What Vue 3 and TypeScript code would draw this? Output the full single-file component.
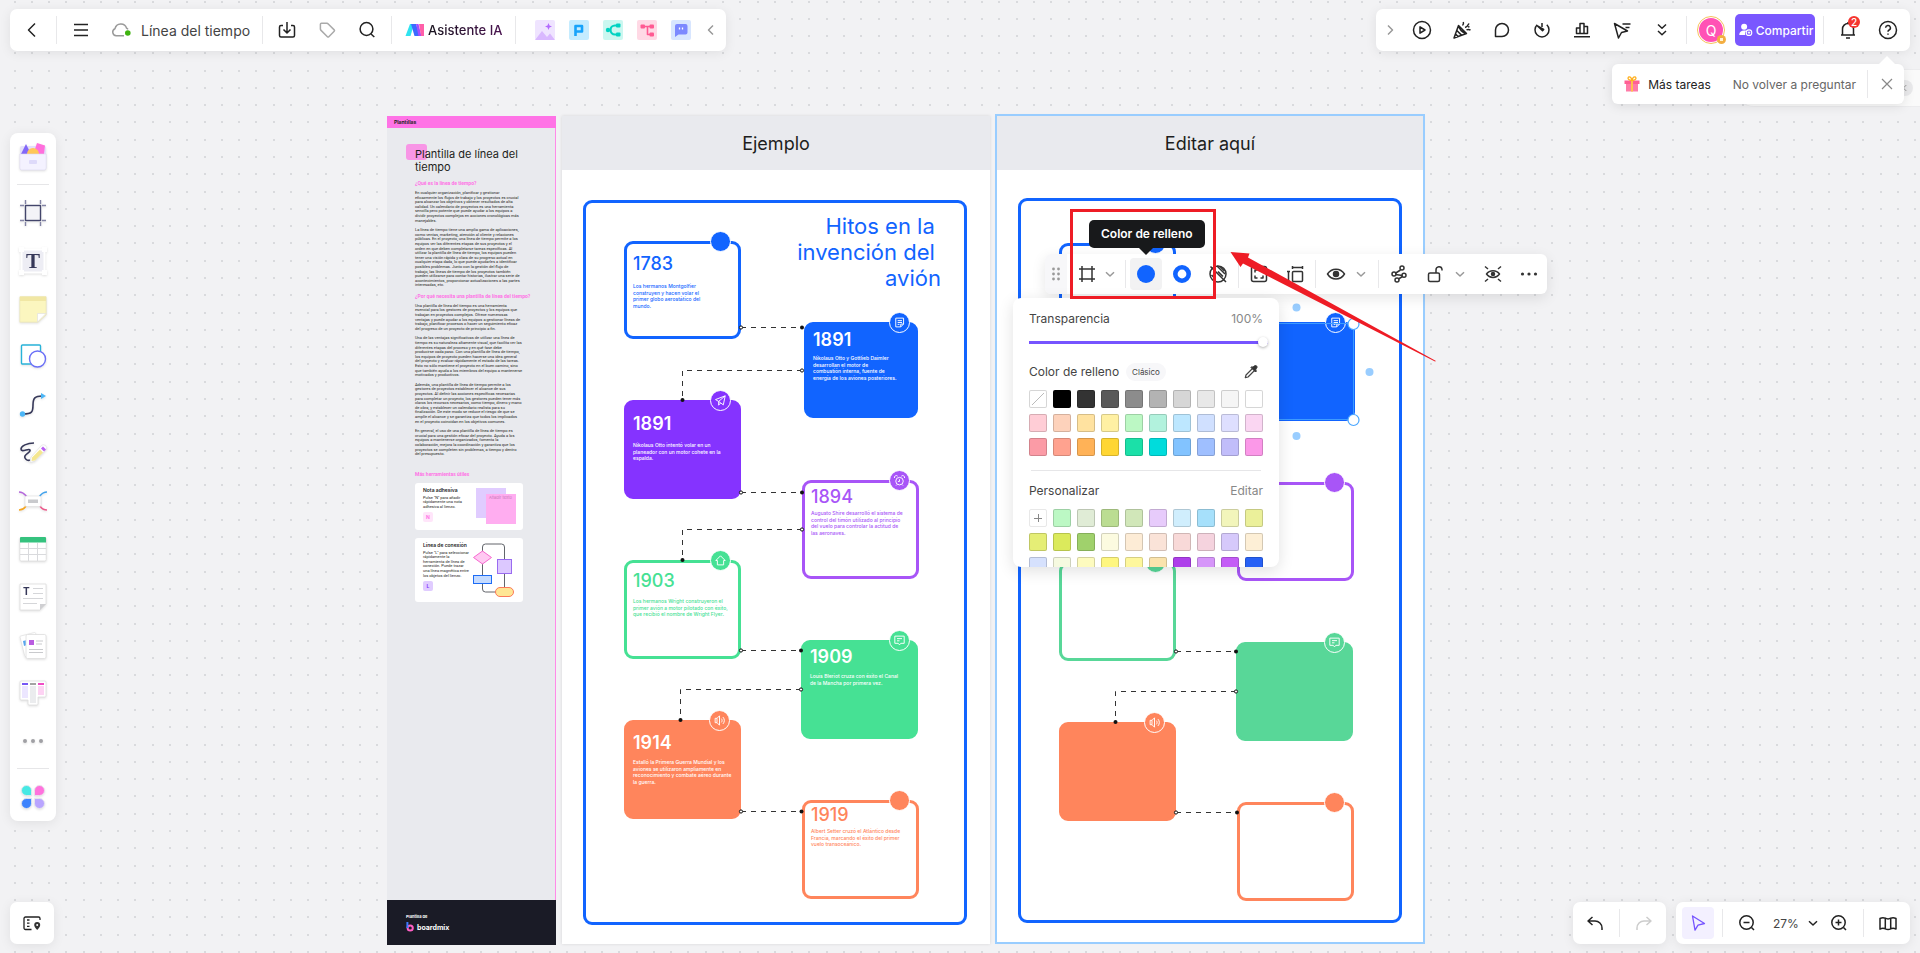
<script setup lang="ts">
import { h, ref } from 'vue'
import type { FunctionalComponent } from 'vue'

const glyphs: Record<string, string> = {
  back: '<path d="M15 5.5 8.5 12l6.500 6.500"/>',
  menu: '<path d="M5 6.500h14M5 12h14M5 17.500h14"/>',
  cloud: '<path stroke="#9a9a9a" d="M15 17.800H7.200A3.700 3.700 0 0 1 6 10.700 6 6 0 0 1 17.600 10.200c.6.3 1 .7 1.400 1.200"/><circle cx="18.800" cy="15" r="2.800" fill="#3fb30f" stroke="none"/>',
  download: '<path d="M8 7.500H6A1.500 1.500 0 0 0 4.500 9v8.500A1.500 1.500 0 0 0 6 19h12a1.500 1.500 0 0 0 1.500-1.500V9A1.500 1.500 0 0 0 18 7.500h-2M12 4v10.500M8.500 11.500l3.500 3.500 3.500-3.500"/>',
  tag: '<path stroke="#aaa" d="M5.400 6.300a1 1 0 0 1 1-1h5.600l1 .4 6.200 6.200a1 1 0 0 1 0 1.400l-5.400 5.400a1 1 0 0 1-1.400 0l-6.600-6.600-.4-1z"/>',
  search: '<circle cx="11.500" cy="11" r="6.400"/><path d="m16 16 3.300 3"/>',
  left: '<path stroke="#999" d="M14 7.500 9.500 12l4.500 4.500"/>',
  right: '<path stroke="#999" d="M10 7.500 14.500 12 10 16.500"/>',
  down: '<path d="m8 10.300 4 3.700 4-3.700"/>',
  play: '<circle cx="12" cy="12" r="8.500"/><path d="M10 8.800v6.400l5-3.200z"/>',
  party: '<path d="M8.500 7.500 4 20l12.500-4.500zM8.500 7.500c.5 3.500 4 7.500 8 8M6.800 12.500l4.700 4.600M5.500 16l2.700 2.600M12.500 7.500c1-.8 1.200-2 .8-3.500M15 9.500c1.500-.5 3-2 4-4M16.500 12c1-.7 2.500-.7 4 0M18 9l1.500-.4"/>',
  bubble: '<path d="M5.500 18.500V12a6.500 6.500 0 1 1 6.500 6.500z"/>',
  timer: '<path d="M12 5v4M7.200 6.800a7 7 0 1 0 9.600 0M7.500 8l5 4.800 1.200-1.300z"/>',
  chart: '<path d="M4 18.700h16M6.500 15.500V10H10v5.500zM10 15.500v-10h4v10zM14 15.500V8.500h3.500v7z"/>',
  pick: '<path d="M4.500 5.500 8.500 20l3-5.500 6-1.500zM12.500 6h8M15.500 9.500h4"/>',
  double: '<path d="m8 6.500 4 3.700 4-3.700M8 13l4 3.700 4-3.700"/>',
  bell: '<path d="M5 17h14M6.500 17v-6a5.500 5.500 0 0 1 11 0v6M10 20h4M12 5.500V4"/>',
  help: '<circle cx="12" cy="12" r="8.500"/><path d="M9.600 9.800a2.400 2.400 0 1 1 3.500 2.200c-.8.400-1.100.800-1.100 1.700M12 15.500v1.300"/>',
  share: '<g fill="#fff" stroke="none"><circle cx="9.500" cy="7.500" r="4"/><path d="M3 18.500c0-4 2.500-6 6.500-6 1 0 2 .1 2.800.4a5 5 0 0 0-1.300 5.600z"/></g><circle cx="16" cy="15.500" r="3.700" stroke="#fff"/><path stroke="#fff" stroke-width="1.300" d="M14.300 15.500h3.400M16 13.800v3.400"/>',
  close: '<path stroke="#888" stroke-width="1.200" d="m7 7 10 10M17 7 7 17"/>',
  gift: '<g stroke="none"><path fill="#ff7ba8" d="M6 12h12v7.500H6z"/><path fill="#ff6095" d="M4.500 8.500h15V12h-15z"/><path fill="#ffc14d" d="M11 8.500h2v11h-2z"/></g><path stroke="#ffb020" stroke-width="1.300" d="M12 8.500C9 8.500 7.500 7 8.200 5.500 9 4 11.500 5 12 8.500c.5-3.500 3-4.500 3.800-3 .7 1.500-.8 3-3.800 3z"/>',
  undo: '<path d="M9.500 6 5 10l4.500 4M5 10h7a7 7 0 0 1 7 7v2"/>',
  redo: '<path stroke="#ccc" d="m14.500 6 4.500 4-4.500 4M19 10h-7a7 7 0 0 0-7 7v2"/>',
  pointer: '<path stroke="#7654ff" stroke-width="1.300" d="m6.500 5 12 7.500-6.500 1.600-3 5z"/>',
  minus: '<circle cx="11.500" cy="11.500" r="6.700"/><path d="M8.500 11.500h6M16.500 16.500 19 19"/>',
  plus: '<circle cx="11.500" cy="11.500" r="6.700"/><path d="M8.500 11.500h6M11.500 8.500v6M16.500 16.500 19 19"/>',
  map: '<path d="M4 7.500c2-1 3.500-1 5.300-.3v10.600c-1.800-.7-3.300-.7-5.300.3zM9.300 7.200c2 1 3.500 1 5.400 0v10.600c-1.900 1-3.400 1-5.400 0M14.700 7.200c1.800-.7 3.300-.7 5.300.3v10.600c-2-1-3.500-1-5.300-.3"/>',
  minimap: '<path stroke-width="1.300" d="M11.500 18.500h-6A1.500 1.500 0 0 1 4 17V7.500A1.500 1.500 0 0 1 5.500 6h13A1.500 1.500 0 0 1 20 7.500V9M7 9h2.500M7 12.200h2.500M7 15.400h2.500"/><path fill="#333" stroke="none" d="M17.200 11a3 3 0 0 1 3 3c0 2-3 5-3 5s-3-3-3-5a3 3 0 0 1 3-3z"/><circle cx="17.200" cy="14" r="1" fill="#fff" stroke="none"/>',
  frame: '<path d="M7 4v16M17 4v16M4 7h16M4 17h16"/>',
  crossed: '<circle cx="12" cy="12" r="8"/><path d="m4.500 4.500 15.500 15.500M11 4l8 8M14 4.500l4.500 4.500M12 9.500l5 5M8.500 16l-3-3"/>',
  corners: '<rect x="4.500" y="4.500" width="15" height="15" rx="2"/><path d="M8 10.500V8h2.500M13.500 8H16v2.500M16 13.500V16h-2.500M10.500 16H8v-2.500"/>',
  size: '<rect x="9.500" y="9.500" width="10" height="10" rx="1"/><path d="M9.500 5.500h10M9.500 4v3M19.500 4v3M5.500 9.500v10M4 9.500h3M4 19.500h3"/>',
  eye: '<path d="M3.500 12c4-6.500 13-6.500 17 0-4 6.500-13 6.500-17 0z"/><circle cx="12" cy="12" r="2.500" fill="currentColor"/>',
  nodes: '<path d="M13.500 8 8 11.500M8.500 12.500l7 1M15.500 14.500 11.500 17"/><circle cx="15" cy="6" r="2"/><circle cx="7" cy="12" r="2"/><circle cx="17" cy="13.300" r="2"/><circle cx="10" cy="18" r="2"/>',
  lock: '<rect x="5.500" y="11" width="11" height="8.500" rx="1.500"/><path d="M13 11V8a3 3 0 0 1 6-.5v1"/>',
  focus: '<path d="M5.500 12c3-4.500 10-4.500 13 0-3 4.500-10 4.500-13 0zM4 4.500 7 7M20 4.500 17 7M4 19.500l3-2.500M20 19.500 17 17"/><circle cx="12" cy="12" r="1.500" fill="currentColor"/>',
  dots: '<g fill="currentColor" stroke="none"><circle cx="5.500" cy="12" r="1.600"/><circle cx="12" cy="12" r="1.600"/><circle cx="18.500" cy="12" r="1.600"/></g>',
  grip: '<g fill="#999" stroke="none"><circle cx="9.500" cy="7" r="1.400"/><circle cx="14.500" cy="7" r="1.400"/><circle cx="9.500" cy="12" r="1.400"/><circle cx="14.500" cy="12" r="1.400"/><circle cx="9.500" cy="17" r="1.400"/><circle cx="14.500" cy="17" r="1.400"/></g>',
  fill: '<circle cx="12" cy="12" r="9" fill="#1164ff" stroke="none"/>',
  ring: '<circle cx="12" cy="12" r="6.700" stroke="#1164ff" stroke-width="4.600"/>',
  dropper: '<path stroke-width="1.200" d="m13.500 8.500-6.500 6.500-.7 2.700 2.700-.7 6.500-6.500"/><path fill="#333" stroke="#333" stroke-width="1" d="m12 7.500 4.500 4.500 1-1-1-1 1-1.700c1-1 .5-2.300-.300-2.600-.8-.3-1.700 0-2.200.6l-1.200 1-.8-.8z"/>',
  photo: '<rect x="2" y="2" width="20" height="20" rx="2" fill="#efe4ff" stroke="none"/><path fill="#d9b8ff" stroke="none" d="m2 22 7-9 5 6 3-3.500 5 6.500z"/><path fill="#b36bff" stroke="none" d="m15.500 5 1 2.500 2.500 1-2.500 1-1 2.500-1-2.500-2.500-1 2.500-1z"/>',
  slides: '<rect x="2" y="2" width="20" height="20" rx="2" fill="#c5ecff" stroke="none"/><path stroke="#17a3fb" stroke-width="2.600" d="M8.500 18V8H15v5.500H9"/>',
  mind: '<rect x="2" y="2" width="20" height="20" rx="2" fill="#cbf7f0" stroke="none"/><g stroke="#00d3c2" stroke-width="2.200"><path d="M17 7.500h-3a4.500 4.500 0 0 0 0 9h3M6 12h4"/></g><g fill="#00d3c2" stroke="none"><circle cx="7" cy="12" r="2.200"/><rect x="15" y="5.500" width="4.500" height="4" rx="1"/><rect x="15" y="14.500" width="4.500" height="4" rx="1"/></g>',
  flow: '<rect x="2" y="2" width="20" height="20" rx="2" fill="#ffd9e5" stroke="none"/><path stroke="#ff5a92" stroke-width="1.600" d="M8 8.500h8M12.500 8.500v8H16"/><g fill="#ff5a92" stroke="none"><rect x="5.500" y="6.500" width="4.500" height="4" rx="1"/><rect x="14.500" y="6.500" width="4.500" height="4" rx="1"/><rect x="14.500" y="14.500" width="4.500" height="4" rx="1"/></g>',
  note: '<rect x="2" y="2" width="20" height="20" rx="2" fill="#d8e6ff" stroke="none"/><path fill="#7c89ff" stroke="none" d="M8 6h8.500a2 2 0 0 1 2 2v6.500a2 2 0 0 1-2 2H9.500L6 19V8a2 2 0 0 1 2-2z"/><path stroke="#fff" stroke-width="1.300" d="M10.500 9.500v2M13.500 9.500v2"/>',
  spark: '<g stroke="none"><path fill="#2fe3f0" d="M2.500 18 7 6h4L7.500 18z"/><path fill="#3b6bff" d="M8 6h5l4 12h-5.500z"/><path fill="#a34dff" d="m13 6 2.500 0 3 12h-3z"/><path fill="#ff5fa8" d="M16 6h5v12h-3z"/></g>',
  memo: '<path d="M6 5h12.500v9.500L14 19H6zM9 9h7M9 12h7M9 15h3M18.500 14.500H14V19"/>',
  plane: '<path d="M19.500 4.500 4 10.500l5 3 10.500-9-3 14.500-7.500-5.500v6l3-3.500"/>',
  clock: '<circle cx="12" cy="13" r="6"/><path d="M12 10v3.500H9.500M4 8a3 3 0 0 1 5-3M20 8a3 3 0 0 0-5-3M8 18.500l-1.500 1.500M16 18.500l1.500 1.500"/>',
  home: '<path d="m4.500 12 7.500-7.500 7.500 7.500H17v7H7v-7z"/>',
  comment: '<path d="M4.500 5h15v11.500H14l-2 2.500-2-2.500H4.500zM8 9h8M8 12.500h4"/>',
  sound: '<path d="M5 8.500h3l4-4v15l-4-4H5zM8 8.500v7M15 9c1.500 2 1.500 4 0 6M17.500 6.500c3 3.500 3 7.500 0 11"/>',
}

const Icon: FunctionalComponent<{ name: string }> = (props) =>
  h('svg', {
    viewBox: '0 0 24 24',
    width: 24,
    height: 24,
    fill: 'none',
    stroke: 'currentColor',
    'stroke-width': 1.5,
    'stroke-linejoin': 'round',
    'aria-hidden': 'true',
    innerHTML: glyphs[props.name],
  })
Icon.props = ['name']

const toolArt: Record<string, string> = {
  library: '<rect x="1" y="3" width="26" height="23" rx="2" fill="#e4e0fa"/><path fill="#8368f8" d="m2 11 5-10 5 10z"/><path fill="#ff6fdc" d="m15 9 3-9 8 2.500-1 8.500-6 1z"/><circle cx="14" cy="11" r="6" fill="#ffc758"/><path fill="#f4f2ff" stroke="#dcd9ee" stroke-width=".6" d="M.8 11h26.400V25a2 2 0 0 1-2 2H2.800a2 2 0 0 1-2-2z"/><rect x="10" y="17" width="8" height="4" rx="1" fill="#dedafa"/>',
  frame: '<rect x="6.500" y="6.500" width="15" height="15" fill="#f3f3f7" stroke="#43456b" stroke-width="1.400"/><path stroke="#8384a5" stroke-width="1.400" d="M6.500 1v4M21.500 1v4M6.500 23v4M21.500 23v4M1 6.500h4M23 6.500h4M1 21.500h4M23 21.500h4"/>',
  shape: '<rect x="2.500" y="2" width="19" height="19" rx="1" fill="#fff" stroke="#28b3d9" stroke-width="1.400"/><circle cx="18.500" cy="16" r="8" fill="#fff" stroke="#6a6ff7" stroke-width="1.400"/>',
  curve: '<path stroke="#363859" stroke-width="1.600" d="M4 23c9 0 10-2 10-9s2-9 9-9" fill="none"/><circle cx="3.500" cy="23" r="2.700" fill="#4cb6f7"/><path fill="#4cb6f7" d="m22 2 5 3-5 3z"/>',
  pencil: '<path fill="none" stroke="#363859" stroke-width="1.600" d="M15 4C8 4 2 7 2 10c0 4 8-1 9 1 1 3-7 4-5 8 1 2 3 3 5 2"/><path fill="#fff" stroke="#ddd" stroke-width=".6" d="m12 18 10-11a3 3 0 0 1 5 4L16 22l-5 1.500z"/><path fill="#f4e690" d="m13 18.500 8-8 3 3-8 8-3.500.5z"/><path fill="#b95ff3" d="m22 9.500 2-2 3 3-2 2z"/>',
  mind: '<path fill="none" stroke="#b467dc" stroke-width="1.500" d="M0 5c5 0 6 3 8 5"/><path fill="none" stroke="#41a2ec" stroke-width="1.500" d="M28 5c-5 0-6 3-8 5"/><path fill="none" stroke="#f5a623" stroke-width="1.500" d="M0 23c5 0 6-3 8-5"/><path fill="none" stroke="#ec5a8c" stroke-width="1.500" d="M28 23c-5 0-6-3-8-5"/><rect x="6" y="9" width="16" height="10.500" rx="1.500" fill="#fff" stroke="#ddd" stroke-width=".6"/><path fill="#c9cacd" d="M9 12.500h10v3.500H9z"/>',
  sticky: '<path fill="#fbf6bf" stroke="#e6e0b5" stroke-width=".6" d="M.8 1.800h26.400v18L19 27.200H.8z"/><path fill="#f1e7a4" d="M1 1.500h26V6H1z"/><path fill="#fff" stroke="#ddd" stroke-width=".6" d="M18.500 27v-8.500H27z"/>',
  table: '<rect x=".8" y="2.500" width="26.400" height="23.500" rx="1.500" fill="#fff" stroke="#ddd" stroke-width=".8"/><path fill="#35c27e" d="M1 3a1 1 0 0 1 1-1h24a1 1 0 0 1 1 1v4.500H1z"/><path stroke="#d9dadd" stroke-width="1" d="M1 13.500h26M1 19.500h26M9.500 8v18M18.500 8v18"/>',
  cards: '<rect x="3" y="3" width="16" height="21" rx="1" fill="#fff" stroke="#ddd" stroke-width=".6" transform="rotate(-14 11 13)"/><path fill="#56a5ee" d="m4 10 4-1v5l-3 1z"/><rect x="7" y="3.500" width="20" height="24" rx="1.500" fill="#fff" stroke="#ddd" stroke-width=".8"/><path fill="#b95ce0" d="M10 9h5v5h-5z"/><path stroke="#c9cacd" stroke-width="1" d="M17 10h7M17 13h6M10 18.500h14M10 21.500h14"/>',
  kanban: '<path fill="#fff" stroke="#ddd" stroke-width=".8" d="M2 2h24a1 1 0 0 1 1 1v14a1 1 0 0 1-1 1h-7v7a1 1 0 0 1-1 1h-8a1 1 0 0 1-1-1v-4H2a1 1 0 0 1-1-1V3a1 1 0 0 1 1-1z"/><path fill="#7657f5" d="M3 4h6v2H3z"/><path fill="#a3a3a3" d="M11 4h6v2h-6z"/><path fill="#f04cc5" d="M19 4h6v2h-6z"/><path fill="#ece6ff" d="M3 7h6v12H3z"/><path fill="#ebecee" d="M11 7h6v17h-6z"/><path fill="#fdd3f3" d="M19 7h6v9h-6z"/>',
  more: '<g fill="#a0a0a4"><circle cx="6" cy="14" r="2"/><circle cx="14" cy="14" r="2"/><circle cx="22" cy="14" r="2"/></g>',
  apps: '<g stroke="#e9e9ee" stroke-width=".8"><path fill="#46e9e4" d="M7.500 2.500a5 5 0 0 1 5 5v5h-5a5 5 0 0 1 0-10z"/><path fill="#ff72dd" d="M20.500 2.500a5 5 0 0 1 0 10h-5v-5a5 5 0 0 1 5-5z"/><path fill="#3d83fd" d="M7.500 25.500a5 5 0 0 1 0-10h5v5a5 5 0 0 1-5 5z"/><path fill="#b9a5ff" d="M20.500 25.500a5 5 0 0 1-5-5v-5h5a5 5 0 0 1 0 10z"/></g>',
}

const tools = [
  { id: 'frame', label: 'Marco' },
  { id: 'text', label: 'Texto' },
  { id: 'sticky', label: 'Nota adhesiva' },
  { id: 'shape', label: 'Forma' },
  { id: 'curve', label: 'Conexión' },
  { id: 'pencil', label: 'Lápiz' },
  { id: 'mind', label: 'Mapa mental' },
  { id: 'table', label: 'Tabla' },
  { id: 'doc', label: 'Documento' },
  { id: 'cards', label: 'Tarjetas' },
  { id: 'kanban', label: 'Kanban' },
  { id: 'more', label: 'Más' },
]

const miniApps = [
  { icon: 'photo', label: 'Imagen IA' },
  { icon: 'slides', label: 'Presentación' },
  { icon: 'mind', label: 'Mapa mental' },
  { icon: 'flow', label: 'Diagrama' },
  { icon: 'note', label: 'Chat' },
]

const meetingTools = [
  { icon: 'play', label: 'Presentar' },
  { icon: 'party', label: 'Celebrar' },
  { icon: 'bubble', label: 'Comentarios' },
  { icon: 'timer', label: 'Temporizador' },
  { icon: 'chart', label: 'Votación' },
  { icon: 'pick', label: 'Cursores' },
  { icon: 'double', label: 'Ver más' },
]

// Background grid: 64 board units at 27 % zoom, each dot snapped to whole pixels.
const step = 64 * 0.27
let gridPath = ''
for (let r = 0; r < 84; r++) {
  for (let c = 0; c < 148; c++) {
    gridPath += `M${Math.floor(14 + c * step)} ${Math.floor(1 + r * step)}h2v2h-2z`
  }
}

interface Card {
  x: number
  y: number
  w: number
  h: number
  color: string
  solid: boolean
  badge: number
  icon?: string
  year?: string
  top?: number
  gap?: number
  lines?: string[]
}

const exampleCards: Card[] = [
  { x: 62, y: 125, w: 117, h: 98, color: '#1164ff', solid: false, badge: 86, year: '1783', top: 9, gap: 8, lines: ['Los hermanos Montgolfier', 'construyen y hacen volar el', 'primer globo aerostático del', 'mundo.'] },
  { x: 242, y: 206, w: 114, h: 96, color: '#1164ff', solid: true, badge: 85, icon: 'memo', year: '1891', top: 4, gap: 4, lines: ['Nikolaus Otto y Gottlieb Daimler', 'desarrollan el motor de', 'combustión interna, fuente de', 'energía de los aviones posteriores.'] },
  { x: 62, y: 284, w: 117, h: 99, color: '#8533ff', solid: true, badge: 86, icon: 'plane', year: '1891', top: 10, gap: 7, lines: ['Nikolaus Otto intentó volar en un', 'planeador con un motor cohete en la', 'espalda.'] },
  { x: 240, y: 364, w: 117, h: 99, color: '#a855f7', solid: false, badge: 87, icon: 'clock', year: '1894', top: 3, gap: 2, lines: ['Augusto Shire desarrolló el sistema de', 'control del timón utilizado al principio', 'del vuelo para controlar la actitud de', 'las aeronaves.'] },
  { x: 62, y: 444, w: 117, h: 99, color: '#46e194', solid: false, badge: 86, icon: 'home', year: '1903', top: 7, gap: 6, lines: ['Los hermanos Wright construyeron el', 'primer avión a motor pilotado con éxito,', 'que recibió el nombre de Wright Flyer.'] },
  { x: 239, y: 524, w: 117, h: 99, color: '#46e194', solid: true, badge: 88, icon: 'comment', year: '1909', top: 3, gap: 5, lines: ['Louis Bleriot cruza con éxito el Canal', 'de la Mancha por primera vez.'] },
  { x: 62, y: 604, w: 117, h: 99, color: '#ff855c', solid: true, badge: 85, icon: 'sound', year: '1914', top: 9, gap: 5, lines: ['Estalló la Primera Guerra Mundial y los', 'aviones se utilizaron ampliamente en', 'reconocimiento y combate aéreo durante', 'la guerra.'] },
  { x: 240, y: 684, w: 117, h: 99, color: '#ff855c', solid: false, badge: 87, year: '1919', top: 1, gap: 2, lines: ['Albert Setter cruzó el Atlántico desde', 'Francia, marcando el éxito del primer', 'vuelo transoceánico.'] },
]

const editCards: Card[] = [
  { x: 62, y: 127, w: 117, h: 98, color: '#1164ff', solid: false, badge: 86 },
  { x: 242, y: 206, w: 116, h: 99, color: '#1164ff', solid: true, badge: 86, icon: 'memo' },
  { x: 62, y: 286, w: 117, h: 99, color: '#8533ff', solid: true, badge: 86, icon: 'plane' },
  { x: 240, y: 366, w: 117, h: 99, color: '#a855f7', solid: false, badge: 87 },
  { x: 62, y: 446, w: 117, h: 99, color: '#58d798', solid: false, badge: 86, icon: 'comment' },
  { x: 239, y: 526, w: 117, h: 99, color: '#58d798', solid: true, badge: 88, icon: 'comment' },
  { x: 62, y: 606, w: 117, h: 99, color: '#ff855c', solid: true, badge: 85, icon: 'sound' },
  { x: 240, y: 686, w: 117, h: 99, color: '#ff855c', solid: false, badge: 87 },
]

interface Link { d: string; from: [number, number]; to: [number, number] }
const link = (x1: number, y1: number, x2: number, y2: number): Link => ({
  d: x2 < x1 ? `M${x1} ${y1}H${x2}V${y2}` : `M${x1} ${y1}H${x2}`,
  from: [x1, y1],
  to: [x2, y2],
})
const exampleLinks = [
  link(179, 211.5, 240, 211.5),
  link(240, 254.5, 120.5, 284),
  link(179, 376.5, 240, 376.5),
  link(240, 413.5, 120.5, 444),
  link(179, 534.5, 239, 534.5),
  link(239, 573.5, 118.5, 604),
  link(179, 695.5, 239.5, 695.5),
]
const editLinks = [
  link(179, 535.5, 239, 535.5),
  link(239, 575.5, 118.5, 606),
  link(179, 696.5, 240, 696.5),
]

const boards = [
  { id: 'example', title: 'Ejemplo', cards: exampleCards, links: exampleLinks },
  { id: 'edit', title: 'Editar aquí', cards: editCards, links: editLinks },
]

const cardStyle = (c: Card) => ({
  left: `${c.x}px`,
  top: `${c.y}px`,
  width: `${c.w}px`,
  height: `${c.h}px`,
  borderColor: c.color,
  color: c.solid ? '#fff' : c.color,
  backgroundColor: c.solid ? c.color : '#fff',
  paddingTop: `${c.top ?? 0}px`,
  rowGap: `${c.gap ?? 0}px`,
})

const guide = [
  {
    title: '¿Qué es la línea de tiempo?',
    paragraphs: [
      ['En cualquier organización, planificar y gestionar', 'eficazmente los flujos de trabajo y los proyectos es crucial', 'para alcanzar los objetivos y obtener resultados de alta', 'calidad. Un calendario de proyectos es una herramienta', 'sencilla pero potente que puede ayudar a los equipos a', 'dividir proyectos complejos en acciones cronológicas más', 'manejables.'],
      ['La línea de tiempo tiene una amplia gama de aplicaciones,', 'como ventas, marketing, atención al cliente y relaciones', 'públicas. En el proyecto, una línea de tiempo permite a los', 'equipos ver las diferentes etapas de sus proyectos y el', 'orden en que deben completarse tareas específicas. Al', 'utilizar la plantilla de línea de tiempo, los equipos pueden', 'tener una visión rápida y clara de su progreso actual en', 'cualquier etapa dada, lo que puede ayudarles a identificar', 'posibles problemas. Junto con la gestión del flujo de', 'trabajo, las líneas de tiempo de los proyectos también', 'pueden utilizarse para contar historias, ilustrar una serie de', 'acontecimientos, proporcionar actualizaciones a las partes', 'interesadas, etc.'],
    ],
  },
  {
    title: '¿Por qué necesita una plantilla de línea del tiempo?',
    paragraphs: [
      ['Una plantilla de línea del tiempo es una herramienta', 'esencial para los gestores de proyectos y los equipos que', 'trabajan en proyectos complejos. Ofrece numerosas', 'ventajas y puede ayudar a los equipos a gestionar líneas de', 'trabajo, planificar procesos o hacer un seguimiento eficaz', 'del progreso de un proyecto de principio a fin.'],
      ['Una de las ventajas significativas de utilizar una línea de', 'tiempo es su naturaleza altamente visual, que facilita ver las', 'diferentes etapas del proceso y en qué fase debe', 'producirse cada paso. Con una plantilla de línea de tiempo,', 'los equipos de proyecto pueden hacerse una idea general', 'del proyecto y evaluar rápidamente el estado de las tareas.', 'Esto no sólo mantiene el proyecto en el buen camino, sino', 'que también ayuda a los miembros del equipo a mantenerse', 'motivados y productivos.'],
      ['Además, una plantilla de línea de tiempo permite a los', 'gestores de proyectos establecer el alcance de sus', 'proyectos. Al definir las acciones específicas necesarias', 'para completar un proyecto, los gestores pueden tener más', 'claros los recursos necesarios, como tiempo, dinero y mano', 'de obra, y establecer un calendario realista para su', 'finalización. De este modo se reduce el riesgo de que se', 'amplíe el alcance y se garantiza que todos los implicados', 'en el proyecto coincidan en los objetivos comunes.'],
      ['En general, el uso de una plantilla de línea de tiempo es', 'crucial para una gestión eficaz del proyecto. Ayuda a los', 'equipos a mantenerse organizados, fomenta la', 'colaboración, mejora la coordinación y garantiza que los', 'proyectos se completen sin problemas, a tiempo y dentro', 'del presupuesto.'],
    ],
  },
]

const classic = [
  'none', '#000000', '#333333', '#595959', '#8c8c8c', '#b3b3b3', '#d6d6d6', '#e8e8e8', '#f5f5f5', '#ffffff',
  '#ffcdd6', '#fdd2bb', '#ffe2a0', '#fff0a3', '#bcf8c4', '#b2f2dd', '#bde7ff', '#d0e0ff', '#dedfff', '#fad6f2',
  '#fb9ba6', '#ffa28f', '#ffb257', '#ffd633', '#1be0a8', '#00dcdc', '#82c3ff', '#9fbfff', '#c1bdfa', '#fb98e8',
]
const custom = [
  'add', '#bcf8c4', '#e0ecd6', '#bbdd92', '#d1e7b9', '#e7cbfb', '#d0eefd', '#a6e0fb', '#f2f5bb', '#ebf09a',
  '#e5ee76', '#dbea5c', '#a0d16c', '#fcfbe0', '#fdecd6', '#fae3d8', '#f8d9d8', '#f5d3de', '#d6c9fb', '#fdefd6',
  '#d6e1fd', '#f6fae0', '#fdfbbf', '#fef67f', '#fef79d', '#fae3ad', '#ae3fea', '#d696f9', '#c45cf6', '#2761f5',
]

const opacity = ref(100)
const zoom = ref('27%')
</script>

<template>
  <div class="app">
    <main class="canvas">
      <svg class="grid" aria-hidden="true"><path :d="gridPath" fill="#d9dadd" /></svg>

      <article class="guide">
        <header class="guide-tag">Plantillas</header>
        <div class="guide-body">
          <h1 class="guide-title">Plantilla de línea del<br />tiempo</h1>
          <section v-for="s in guide" :key="s.title" class="guide-section">
            <h2 class="guide-heading">{{ s.title }}</h2>
            <p v-for="(p, i) in s.paragraphs" :key="i" class="guide-text">{{ p.join('\n') }}</p>
          </section>
          <section class="guide-tools">
            <h2 class="guide-heading">Más herramientas útiles</h2>
            <div class="tip-card">
              <div class="tip-copy">
                <h3 class="tip-title">Nota adhesiva</h3>
                <p class="guide-text">{{ 'Pulse "N" para añadir\nrápidamente una nota\nadhesiva al lienzo.' }}</p>
                <kbd class="key key-pink">N</kbd>
              </div>
              <svg class="tip-art" width="46" height="39" viewBox="0 0 46 39">
                <rect x="3" y="1" width="30" height="30" fill="#e0ccff" />
                <rect x="13" y="7" width="30" height="30" fill="#ffadf0" />
                <text x="16" y="12" font-size="4" fill="#c779b8">Añadir texto</text>
              </svg>
            </div>
            <div class="tip-card tall">
              <div class="tip-copy">
                <h3 class="tip-title">Línea de conexión</h3>
                <p class="guide-text">{{ 'Pulse "L" para seleccionar\nrápidamente la\nherramienta de línea de\nconexión. Puede trazar\nuna línea magnética entre\nlos objetos del lienzo.' }}</p>
                <kbd class="key key-violet">L</kbd>
              </div>
              <svg class="tip-art" width="46" height="56" viewBox="0 1 46 56" fill="none">
                <path stroke="#62656b" stroke-width="1" d="M9.500 14V6a3 3 0 0 1 3-3h16a3 3 0 0 1 3 3v42M9.500 22v26a3 3 0 0 0 3 3h12" />
                <path fill="#ffc9f2" stroke="#f768cf" d="m9.500 10 9 6.500-9 6.500-9-6.500z" />
                <rect x="24.500" y="18.500" width="14" height="14" fill="#dcc8ff" stroke="#9a6bf0" />
                <rect x=".5" y="34.500" width="18" height="8" fill="#c5dbff" stroke="#1d6cf5" />
                <rect x="22.500" y="46.500" width="18" height="9" rx="4.500" fill="#ffe694" stroke="#fb7a5a" />
              </svg>
            </div>
          </section>
        </div>
        <footer class="guide-foot">
          <span class="foot-note">Plantilla de</span>
          <span class="brand">
            <svg width="8" height="10" viewBox="0 0 8 10" fill="none" stroke-width="2">
              <circle cx="4.200" cy="6" r="2.600" stroke="#ff5fc4" />
              <path stroke="#3d7bff" d="M1.400 0v6" />
            </svg>
            boardmix
          </span>
        </footer>
      </article>

      <article v-for="b in boards" :key="b.id" class="board" :class="b.id">
        <header class="board-title">{{ b.title }}</header>
        <div class="outline"></div>
        <p v-if="b.id === 'example'" class="headline">Hitos en la&nbsp;<br />invención del&nbsp;<br />avión</p>
        <div v-for="c in b.cards" :key="c.y" class="card" :style="cardStyle(c)">
          <strong v-if="c.year" class="year" :class="{ solid: c.solid }">{{ c.year }}</strong>
          <p v-if="c.lines" class="fact">{{ c.lines.join('\n') }}</p>
          <span class="badge" :style="{ left: `${c.badge - 3}px`, backgroundColor: c.color }">
            <Icon v-if="c.icon" :name="c.icon" class="badge-icon" />
          </span>
        </div>
        <svg class="links" aria-hidden="true">
          <g v-for="l in b.links" :key="l.d">
            <path :d="l.d" fill="none" stroke="#333" stroke-width="1" stroke-dasharray="5 5" />
            <circle :cx="l.from[0]" :cy="l.from[1]" r="1.600" fill="#fff" stroke="#111" />
            <circle :cx="l.to[0]" :cy="l.to[1]" r="2" fill="#111" />
          </g>
        </svg>
      </article>

      <svg class="selection" width="150" height="150" viewBox="0 0 150 150" aria-hidden="true">
        <rect x=".5" y="20.500" width="124" height="96" fill="none" stroke="#3d9bff" />
        <g fill="#99cdff"><circle cx="67.500" cy="4.500" r="4" /><circle cx="140.500" cy="69" r="4" /><circle cx="67.500" cy="133" r="4" /></g>
        <g fill="#fff" stroke="#4aa6ff" stroke-width="1.200"><circle cx="124.500" cy="21" r="5.500" /><circle cx="124.500" cy="117" r="5.500" /></g>
      </svg>

      <div class="floatbar" role="toolbar" aria-label="Formato">
        <button class="grip" aria-label="Mover"><Icon name="grip" /></button>
        <button class="fbtn" aria-label="Marco"><Icon name="frame" /></button>
        <button class="more slim" aria-label="Opciones de marco"><Icon name="down" class="more-icon" /></button>
        <i class="sep"></i>
        <button class="fbtn active" aria-label="Relleno"><Icon name="fill" /></button>
        <button class="fbtn" aria-label="Borde"><Icon name="ring" /></button>
        <button class="fbtn" aria-label="Sin trazo"><Icon name="crossed" /></button>
        <i class="sep"></i>
        <button class="fbtn" aria-label="Ajustar"><Icon name="corners" /></button>
        <button class="fbtn" aria-label="Tamaño"><Icon name="size" /></button>
        <i class="sep"></i>
        <button class="fbtn" aria-label="Ver"><Icon name="eye" /></button>
        <button class="more" aria-label="Opciones de vista"><Icon name="down" class="more-icon" /></button>
        <i class="sep"></i>
        <button class="fbtn" aria-label="Conectar"><Icon name="nodes" /></button>
        <button class="fbtn" aria-label="Bloquear"><Icon name="lock" /></button>
        <button class="more" aria-label="Opciones de bloqueo"><Icon name="down" class="more-icon" /></button>
        <button class="fbtn" aria-label="Enfocar"><Icon name="focus" /></button>
        <button class="fbtn" aria-label="Más opciones"><Icon name="dots" /></button>
      </div>

      <section class="palette">
        <div class="prow">
          <label for="opacity">Transparencia</label>
          <output for="opacity" class="muted">{{ opacity }}%</output>
        </div>
        <input id="opacity" v-model="opacity" class="slider" type="range" min="0" max="100" />
        <div class="prow fill-row">
          <span>Color de relleno</span>
          <button class="chip">Clásico</button>
          <button class="dropper" aria-label="Cuentagotas"><Icon name="dropper" /></button>
        </div>
        <div class="swatches">
          <button v-for="c in classic" :key="c" class="swatch" :class="{ none: c === 'none' }" :style="{ backgroundColor: c === 'none' ? '#fff' : c }" :aria-label="c">
            <svg v-if="c === 'none'" width="16" height="16" viewBox="0 0 16 16"><path d="m2 14 12-12" stroke="#bbb" /></svg>
          </button>
        </div>
        <hr class="rule" />
        <div class="prow custom-row">
          <span>Personalizar</span>
          <button class="link muted">Editar</button>
        </div>
        <div class="swatches">
          <button v-for="c in custom" :key="c" class="swatch" :class="{ add: c === 'add' }" :style="{ backgroundColor: c === 'add' ? '#fff' : c }" :aria-label="c">
            <svg v-if="c === 'add'" width="16" height="16" viewBox="0 0 16 16"><path d="M4 8.500h8M8.500 4v8" stroke="#888" /></svg>
          </button>
        </div>
      </section>

      <div class="tooltip" role="tooltip">Color de relleno</div>
      <svg class="annotation" width="370" height="160" viewBox="0 0 370 160" aria-hidden="true">
        <rect x="2.500" y="2.500" width="143" height="87" fill="none" stroke="#ee1c25" stroke-width="3" />
        <path fill="#ee1c25" d="m161.500 44 19 1.500-1.500 4L367 153l-1 .5L174 55.500l-2.500 3.500z" />
      </svg>
    </main>

    <header class="topbar">
      <nav class="bar" aria-label="Archivo">
        <button class="ibtn" aria-label="Volver"><Icon name="back" /></button>
        <i class="sep"></i>
        <button class="ibtn" aria-label="Menú"><Icon name="menu" /></button>
        <span class="ibtn"><Icon name="cloud" /></span>
        <span class="doc-name">Línea del tiempo</span>
        <i class="sep"></i>
        <button class="ibtn" aria-label="Descargar"><Icon name="download" /></button>
        <button class="ibtn" aria-label="Etiqueta"><Icon name="tag" /></button>
        <button class="ibtn" aria-label="Buscar"><Icon name="search" /></button>
        <i class="sep"></i>
        <button class="assistant"><Icon name="spark" /><span>Asistente IA</span></button>
        <i class="sep"></i>
        <div class="mini-apps">
          <button v-for="a in miniApps" :key="a.icon" class="mbtn" :aria-label="a.label"><Icon :name="a.icon" /></button>
        </div>
        <button class="mbtn" aria-label="Contraer"><Icon name="left" /></button>
      </nav>

      <div class="right-side">
        <nav class="bar" aria-label="Colaboración">
          <button class="nbtn" aria-label="Expandir"><Icon name="right" /></button>
          <button v-for="m in meetingTools" :key="m.icon" class="ibtn" :aria-label="m.label"><Icon :name="m.icon" /></button>
          <i class="sep"></i>
          <button class="avatar" aria-label="Perfil">Q<i class="crown"></i></button>
          <button class="share"><Icon name="share" class="share-icon" />Compartir</button>
          <i class="sep"></i>
          <button class="ibtn bell" aria-label="Notificaciones"><Icon name="bell" /><b class="count">2</b></button>
          <button class="ibtn" aria-label="Ayuda"><Icon name="help" /></button>
        </nav>
        <div class="tucked" aria-hidden="true"><span class="tucked-dot"><Icon name="left" class="tucked-icon" /></span></div>
        <aside class="promo">
          <Icon name="gift" />
          <span class="promo-title">Más tareas</span>
          <button class="promo-skip">No volver a preguntar</button>
          <i class="sep"></i>
          <button class="promo-close" aria-label="Cerrar"><Icon name="close" /></button>
        </aside>
      </div>
    </header>

    <div class="middle">
      <nav class="sidebar" aria-label="Herramientas">
        <button class="tool" aria-label="Plantillas"><svg class="art" width="28" height="28" viewBox="0 0 28 28" v-html="toolArt.library"></svg></button>
        <i class="hsep"></i>
        <button v-for="t in tools" :key="t.id" class="tool" :aria-label="t.label">
          <svg v-if="t.id === 'text'" class="art" width="28" height="28" viewBox="0 0 28 28">
            <rect x="2.500" y="2.500" width="23" height="23" fill="#ededf4" stroke="#fff" stroke-width="2" />
            <g fill="#fff"><rect width="5" height="5" /><rect x="23" width="5" height="5" /><rect y="23" width="5" height="5" /><rect x="23" y="23" width="5" height="5" /></g>
            <text x="14" y="21" text-anchor="middle" font-family="Liberation Serif, serif" font-size="21" font-weight="700" fill="#363859">T</text>
          </svg>
          <svg v-else-if="t.id === 'doc'" class="art" width="28" height="28" viewBox="0 0 28 28">
            <path fill="#fff" stroke="#ddd" stroke-width=".8" d="M1 1h26v20l-6 6H1z" />
            <path fill="#cfcfd2" d="M21 27v-6h6z" />
            <text x="4" y="12" font-size="10" font-weight="700" fill="#363859">T</text>
            <path stroke="#d5d6d9" d="M14 5.500h10M14 10.500h10M4 15.500h20M4 20.500h14" />
          </svg>
          <svg v-else class="art" width="28" height="28" viewBox="0 0 28 28" v-html="toolArt[t.id]"></svg>
        </button>
        <i class="hsep"></i>
        <button class="tool" aria-label="Aplicaciones"><svg class="art" width="28" height="28" viewBox="0 0 28 28" v-html="toolArt.apps"></svg></button>
      </nav>
    </div>

    <footer class="bottombar">
      <div class="bar"><button class="ibtn" aria-label="Minimapa"><Icon name="minimap" /></button></div>
      <div class="bottom-right">
        <div class="bar">
          <button class="ibtn" aria-label="Deshacer"><Icon name="undo" /></button>
          <i class="sep"></i>
          <button class="ibtn" aria-label="Rehacer"><Icon name="redo" /></button>
        </div>
        <div class="bar">
          <button class="ibtn selected" aria-label="Seleccionar"><Icon name="pointer" /></button>
          <i class="sep"></i>
          <button class="ibtn" aria-label="Alejar"><Icon name="minus" /></button>
          <label class="zoom">
            <select v-model="zoom" aria-label="Zoom"><option>27%</option><option>50%</option><option>100%</option></select>
            <Icon name="down" />
          </label>
          <button class="ibtn" aria-label="Acercar"><Icon name="plus" /></button>
          <i class="sep"></i>
          <button class="ibtn" aria-label="Mapa"><Icon name="map" /></button>
        </div>
      </div>
    </footer>
  </div>
</template>

<style>
body {
  margin: 0;
}
</style>

<style scoped>
.app {
  position: relative;
  display: flex;
  flex-direction: column;
  min-height: 100vh;
  overflow: hidden;
  background: #f2f2f4;
  color: #222;
  font-family: Inter, "Liberation Sans", sans-serif;
  font-size: 12px;
}
button {
  display: flex;
  align-items: center;
  justify-content: center;
  flex: none;
  margin: 0;
  padding: 0;
  border: 0;
  background: none;
  color: inherit;
  font: inherit;
}
svg { flex: none; display: block; }
h1, h2, h3, p { margin: 0; font-weight: 400; }

/* free canvas */
.canvas { position: absolute; inset: 0; overflow: hidden; }
.grid { position: absolute; inset: 0; width: 100%; height: 100%; }

.guide {
  position: absolute;
  left: 387px;
  top: 116px;
  display: flex;
  flex-direction: column;
  box-sizing: border-box;
  width: 169px;
  height: 829px;
  background: #e9eaee;
}
.guide-tag {
  height: 12px;
  padding-left: 7px;
  background: #ff73e6;
  font-size: 5px;
  line-height: 12px;
  font-weight: 700;
}
.guide-body {
  flex: 1;
  padding: 20px 0 0 28px;
  border-right: 1px solid #ff8be8;
}
.guide-title {
  position: relative;
  z-index: 0;
  font-size: 11px;
  line-height: 13px;
  color: #1d1e20;
}
.guide-title::before {
  content: "";
  position: absolute;
  z-index: -1;
  left: -9px;
  top: -4px;
  width: 21px;
  height: 16px;
  border-radius: 3px;
  background: #f896e6;
}
.guide-section { margin-top: 6px; }
.guide-section + .guide-section { margin-top: 0; }
.guide-heading {
  margin-bottom: 5px;
  font-family: Roboto, "Liberation Sans", sans-serif;
  font-size: 5px;
  line-height: 6px;
  font-weight: 700;
  color: #ff73e6;
  white-space: nowrap;
}
.guide-text {
  margin-bottom: 5px;
  font-family: Roboto, "Liberation Sans", sans-serif;
  font-size: 4px;
  line-height: 1.15;
  color: #1d1e20;
  white-space: pre;
}
.guide-tools {
  display: flex;
  flex-direction: column;
  gap: 8px;
  margin: 14px 32px 0 0;
}
.guide-tools > .guide-heading { margin-bottom: -2px; }
.tip-card {
  display: flex;
  justify-content: space-between;
  box-sizing: border-box;
  min-height: 47px;
  padding: 4px 4px 4px 8px;
  border-radius: 3px;
  background: #fff;
}
.tip-card.tall { min-height: 64px; }
.tip-copy { width: 48px; }
.tip-title { margin-bottom: 2px; font-size: 5px; line-height: 7px; font-weight: 600; white-space: nowrap; }
.tip-copy .guide-text { margin-bottom: 3px; }
.key {
  display: block;
  width: 10px;
  height: 10px;
  border-radius: 2px;
  font-family: inherit;
  font-size: 5px;
  line-height: 10px;
  font-weight: 700;
  text-align: center;
}
.key-pink { background: #ffe5fa; color: #ff73e6; }
.key-violet { background: #e0ccff; color: #8533ff; }
.guide-foot {
  display: flex;
  flex-direction: column;
  gap: 3px;
  height: 31px;
  padding: 14px 0 0 19px;
  background: #1a1b26;
  color: #fff;
}
.foot-note { font-size: 4px; line-height: 5px; font-weight: 700; }
.brand { display: flex; align-items: center; gap: 3px; font-size: 7px; line-height: 9px; font-weight: 700; }

.board {
  position: absolute;
  top: 116px;
  width: 428px;
  height: 828px;
  background: #fff;
  box-shadow: 0 0 3px rgba(0, 0, 0, 0.12);
}
.board.example { left: 562px; }
.board.edit { left: 997px; width: 426px; height: 826px; outline: 2px solid #99cdff; }
.board-title {
  height: 54px;
  background: #e9eaee;
  font-size: 18px;
  line-height: 56px;
  text-align: center;
  color: #1d1e20;
}
.outline {
  position: absolute;
  box-sizing: border-box;
  left: 21px;
  top: 84px;
  width: 384px;
  height: 725px;
  border: 3px solid #1164ff;
  border-radius: 9px;
}
.edit .outline { top: 82px; }
.headline {
  position: absolute;
  right: 49px;
  top: 97px;
  font-size: 22px;
  line-height: 26px;
  text-align: right;
  color: #1164ff;
}
.card {
  position: absolute;
  box-sizing: border-box;
  display: flex;
  flex-direction: column;
  padding-left: 6px;
  border: 3px solid;
  border-radius: 9px;
}
.year { font-size: 18px; line-height: 22px; font-weight: 500; }
.year.solid { font-weight: 600; }
.fact { font-size: 5px; line-height: 1.3; font-weight: 500; white-space: pre; }
.badge {
  position: absolute;
  top: -13px;
  display: flex;
  align-items: center;
  justify-content: center;
  width: 19px;
  height: 19px;
  border: 1px solid #fff;
  border-radius: 50%;
  color: #fff;
}
.badge-icon { width: 15px; height: 15px; }
.links { position: absolute; inset: 0; width: 100%; height: 100%; }
.selection { position: absolute; left: 1229px; top: 303px; }

.floatbar {
  position: absolute;
  left: 1045px;
  top: 254px;
  display: flex;
  align-items: center;
  gap: 4px;
  height: 40px;
  padding-right: 2px;
  border-radius: 6px;
  background: #fff;
  box-shadow: 0 4px 14px rgba(0, 0, 0, 0.1);
  color: #333;
}
.floatbar .sep { margin: 0; }
.grip { width: 22px; height: 40px; border-radius: 6px 0 0 6px; background: #f7f7f9; }
.fbtn { width: 32px; height: 32px; border-radius: 4px; }
.fbtn.active { background: #f2f2f3; }
.more { width: 22px; height: 32px; margin-left: -4px; color: #999; }
.more.slim { width: 18px; }
.more-icon { margin-right: 4px; }

.tooltip {
  position: absolute;
  left: 1089px;
  top: 220px;
  padding: 0 12px;
  border-radius: 5px;
  background: #18191b;
  color: #fff;
  font-size: 12px;
  line-height: 28px;
  font-weight: 600;
}
.tooltip::after {
  content: "";
  position: absolute;
  left: 50px;
  top: 28px;
  border: 7px solid transparent;
  border-top-color: #18191b;
  border-bottom: 0;
}
.annotation { position: absolute; left: 1069px; top: 208px; }

.palette {
  position: absolute;
  left: 1013px;
  top: 298px;
  box-sizing: border-box;
  width: 266px;
  max-height: 269px;
  padding: 12px 16px 0;
  overflow: hidden;
  border-radius: 8px;
  background: #fff;
  box-shadow: 0 4px 16px rgba(0, 0, 0, 0.12);
  color: #444;
}
.prow { display: flex; align-items: center; justify-content: space-between; line-height: 18px; }
.muted { color: #888; }
.slider {
  display: block;
  appearance: none;
  width: calc(100% + 5px);
  height: 12px;
  margin: 8px 0 15px;
  background: linear-gradient(#7654ff, #7654ff) center / 100% 3px no-repeat;
}
.slider::-webkit-slider-thumb {
  appearance: none;
  width: 10px;
  height: 10px;
  border-radius: 50%;
  background: #fff;
  box-shadow: 0 1px 3px rgba(0, 0, 0, 0.3);
}
.chip {
  height: 18px;
  margin: 0 auto 0 7px;
  padding: 0 6px;
  border-radius: 9px;
  background: #f7f7f9;
  font-size: 8px;
}
.dropper { width: 24px; height: 18px; }
.fill-row { margin-bottom: 9px; }
.swatches { display: grid; grid-template-columns: repeat(10, 18px); gap: 6px; }
.swatch { width: 18px; height: 18px; border: 1px solid rgba(0, 0, 0, 0.16); border-radius: 2px; }
.swatch.add { border-color: #e8e8e8; }
.rule { height: 1px; margin: 14px 2px 11px; border: 0; background: #e6e6e8; }
.custom-row { margin-bottom: 9px; }

/* window chrome */
.bar {
  display: flex;
  align-items: center;
  height: 42px;
  padding: 0 2px;
  border-radius: 7px;
  background: #fff;
  box-shadow: 0 2px 12px rgba(0, 0, 0, 0.08);
  pointer-events: auto;
}
.sep { flex: none; width: 1px; height: 28px; margin: 0 4px; background: #e8e8ea; }
.topbar, .middle, .bottombar { position: relative; pointer-events: none; }
.topbar { display: flex; justify-content: space-between; align-items: flex-start; padding: 9px 10px 0; }
.ibtn { display: flex; align-items: center; justify-content: center; flex: none; width: 40px; height: 40px; }
.nbtn { width: 24px; height: 40px; }
.doc-name { margin-right: 8px; font-size: 14px; color: #444; white-space: nowrap; }
.assistant { gap: 1px; padding: 0 9px 0 7px; font-size: 13px; font-weight: 500; white-space: nowrap; }
.assistant span {
  background: linear-gradient(90deg, #16121c, #4a1450);
  background-clip: text;
  color: transparent;
}
.mini-apps { display: flex; margin-left: 8px; }
.mbtn { width: 34px; height: 40px; }
.bar > .mbtn { width: 26px; }
.right-side { position: relative; }
.avatar {
  position: relative;
  box-sizing: border-box;
  width: 28px;
  height: 28px;
  margin: 0 10px 0 6px;
  border: 2px solid #fff;
  border-radius: 50%;
  outline: 1px solid #f7c25c;
  outline-offset: -1px;
  background: #ff52b5;
  color: #fff;
  font-size: 14px;
}
.crown { position: absolute; right: -3px; bottom: -2px; width: 9px; height: 9px; border-radius: 50%; background: radial-gradient(circle, #fff3d6 0 25%, #f3ae42 30%); }
.share {
  gap: 1px;
  box-sizing: border-box;
  width: 80px;
  height: 32px;
  margin-right: 4px;
  border-radius: 5px;
  background: #7a57ff;
  color: #fff;
  font-size: 12px;
  font-weight: 500;
}
.share-icon { width: 18px; height: 18px; }
.bell { position: relative; }
.count {
  position: absolute;
  left: 20px;
  top: 6px;
  width: 12px;
  height: 12px;
  border-radius: 50%;
  background: #f5352f;
  color: #fff;
  font-size: 10px;
  line-height: 12px;
  font-weight: 500;
  text-align: center;
}
.promo {
  position: absolute;
  top: 55px;
  right: 6px;
  display: flex;
  align-items: center;
  height: 40px;
  padding: 0 5px 0 8px;
  border-radius: 6px;
  background: #fff;
  box-shadow: 0 2px 12px rgba(0, 0, 0, 0.1);
  white-space: nowrap;
  pointer-events: auto;
}
.promo::before {
  content: "";
  position: absolute;
  right: 9px;
  top: -8px;
  border: 8px solid transparent;
  border-bottom-color: #fff;
  border-top: 0;
}
.promo-title { margin: 0 22px 0 4px; color: #222; }
.promo-skip { margin-right: 7px; color: #666; }
.promo-close { width: 24px; height: 24px; margin-left: 3px; }
.tucked {
  position: absolute;
  top: 60px;
  right: -10px;
  display: flex;
  align-items: center;
  justify-content: flex-end;
  box-sizing: border-box;
  width: 185px;
  height: 38px;
  padding-right: 7px;
  border: 1px solid #ececee;
  border-right: 0;
  border-radius: 19px 0 0 19px;
  background: #fafafa;
}
.tucked-dot { display: flex; align-items: center; justify-content: center; width: 16px; height: 16px; border-radius: 50%; background: #e9e9eb; }
.tucked-icon { width: 16px; height: 16px; }

.middle { flex: 1; display: flex; align-items: center; padding: 0 10px; }
.sidebar {
  display: flex;
  flex-direction: column;
  align-items: center;
  width: 46px;
  border-radius: 8px;
  background: #fff;
  box-shadow: 0 2px 12px rgba(0, 0, 0, 0.08);
  pointer-events: auto;
}
.tool { width: 46px; height: 48px; }
.art { filter: drop-shadow(0 1px 1px rgba(0, 0, 0, 0.12)); overflow: visible; }
.hsep { width: 32px; height: 1px; margin: 3px 0 4px; background: #e6e6e8; }
.bottombar { display: flex; justify-content: space-between; padding: 0 10px 9px; }
.bottom-right { display: flex; gap: 10px; }
.selected { width: 32px; height: 32px; margin: 0 4px; border-radius: 4px; background: #f3f0ff; }
.zoom { display: flex; align-items: center; width: 52px; }
.zoom select {
  appearance: none;
  width: 34px;
  padding: 0 0 0 6px;
  border: 0;
  background: none;
  color: #444;
  font: inherit;
}
</style>
